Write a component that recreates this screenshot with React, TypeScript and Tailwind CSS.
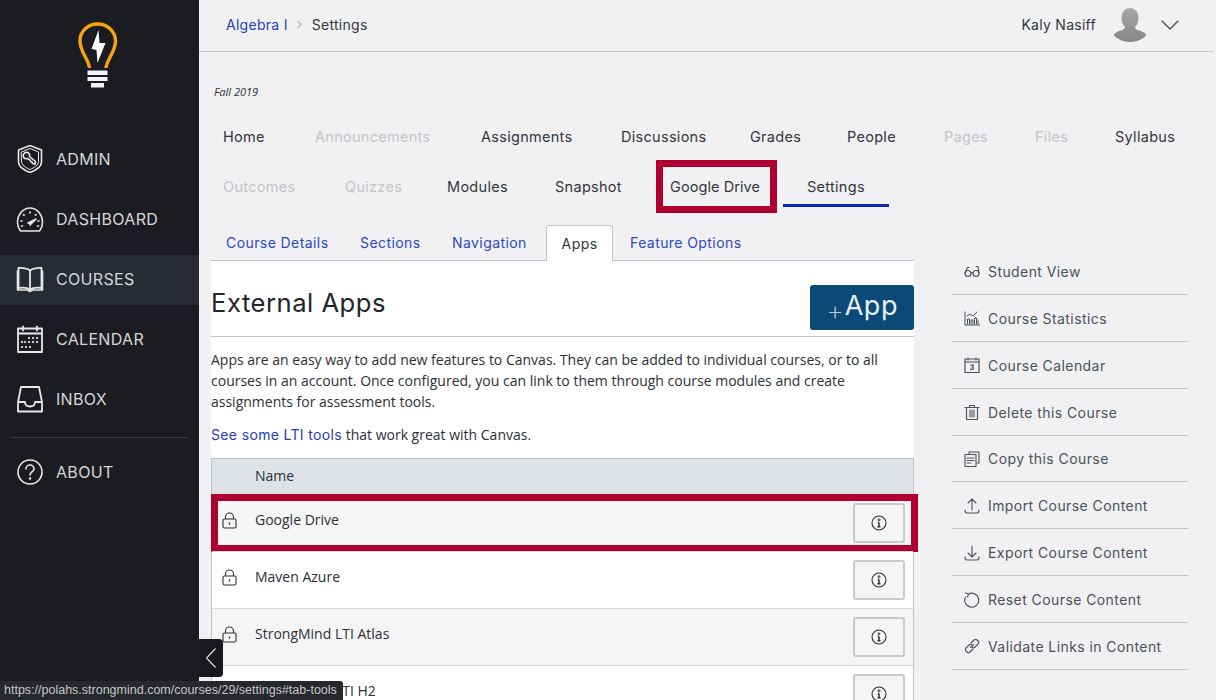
import type { ReactNode } from "react";
import { ChevronDown, ChevronRight } from "lucide-react";

const heading = "font-['Inter','Noto_Sans',sans-serif] tracking-[0.02em]";
const body = "font-['Open_Sans','Noto_Sans',sans-serif]";

const Svg = ({ size = 28, vb = "0 0 28 28", sw = 1.6, children }: { size?: number; vb?: string; sw?: number; children: ReactNode }) => (
  <svg width={size} height={size} viewBox={vb} fill="none" stroke="currentColor" strokeWidth={sw} strokeLinecap="round" strokeLinejoin="round" className="shrink-0">
    {children}
  </svg>
);

const sideIcons: Record<string, ReactNode> = {
  ADMIN: (
    <Svg>
      <path d="M14 .5 25.500 5v12c0 4.500-5 8-11.500 10.500C7.500 25 2.500 21.500 2.500 17V5z" />
      <path d="M5.500 7 14 3.500 22.500 7v9.500c0 3.500-4 6-8.500 8-4.500-2-8.500-4.500-8.500-8z" strokeWidth="1" />
      <path d="M8 8.500c1.500-1.500 4-1.500 5 0 .8 1 .8 2 .5 3l6 5-.5 2.500-2.500-.5-.5-1.500-1.500-.5-.5-1.500-2.500-1.500c-1.500.5-3 0-3.700-1-.8-1.300-.8-3 .2-4z" />
    </Svg>
  ),
  DASHBOARD: (
    <Svg>
      <path d="M4.500 26C2.500 23.500 1.500 20.500 1.500 17.500 1.500 9.500 7 3 14 3s12.500 6.500 12.500 14.500c0 3-1 6-3 8.500z" />
      <path d="m12 18 8-4-6 6" fill="currentColor" />
      <path d="M14 7v1M7.500 9.500l.6.6M5 16h1M20 9.500l-.6.6M23 16h-1M5.500 21h1M21.500 21h1" />
    </Svg>
  ),
  COURSES: (
    <Svg>
      <path d="M14 5.500C12 3.500 6 2.500 2.500 3v20c4-.5 9.500 0 11.500 1.500 2-1.500 7.500-2 11.500-1.500V3C22 2.500 16 3.500 14 5.500zM14 5.500v19" strokeWidth="1.800" />
      <path d="M1.500 6v19h10l2.500 1.500 2.500-1.500h10V6" strokeWidth="1.600" />
    </Svg>
  ),
  CALENDAR: (
    <Svg>
      <rect x="2" y="3.500" width="24" height="23.500" strokeWidth="1.800" />
      <path d="M2 8.500h24M7 1.500v4M21 1.500v4" strokeWidth="1.800" />
      <path d="M13 13h.1M17 13h.1M21 13h.1M9 17h.1M13 17h.1M17 17h.1M21 17h.1M6 17h.1M6 22h.1M10 22h.1M14 22h.1" strokeWidth="2.200" />
    </Svg>
  ),
  INBOX: (
    <Svg>
      <path d="M2 26.500V17L5 2h18l3 15v9.500zM2 17h7c0 3 2 4.500 5 4.500s5-1.500 5-4.500h7" strokeWidth="1.800" />
    </Svg>
  ),
  ABOUT: (
    <Svg>
      <circle cx="14" cy="14" r="12" />
      <path d="M10 11c0-2.500 2-4 4-4s4 1.500 4 3.800c0 3-4 3.200-4 6.200" />
      <path d="M14 20.500v.1" strokeWidth="2.400" />
    </Svg>
  ),
};

const sideItems = ["ADMIN", "DASHBOARD", "COURSES", "CALENDAR", "INBOX"];

const SideItem = ({ label, active }: { label: string; active?: boolean }) => (
  <div className={`flex h-[50px] items-center pb-[2px] pl-4 ${active ? "bg-[#272b33]" : ""}`}>
    <span className="w-10 text-[#e8e8e8]">{sideIcons[label]}</span>
    <span className={`${heading} text-[16px] text-[#d6d6d6]`}>{label}</span>
  </div>
);

const rowOne = [
  { t: "Home", w: "w-[92px]" },
  { t: "Announcements", w: "w-[166px]", off: true },
  { t: "Assignments", w: "w-[140px]" },
  { t: "Discussions", w: "w-[129px]" },
  { t: "Grades", w: "w-[97px]" },
  { t: "People", w: "w-[97px]" },
  { t: "Pages", w: "w-[91px]", off: true },
  { t: "Files", w: "w-[80px]", off: true },
  { t: "Syllabus", w: "w-[58px]" },
];

const rowTwo = [
  { t: "Outcomes", w: "w-[122px]", off: true },
  { t: "Quizzes", w: "w-[102px]", off: true },
  { t: "Modules", w: "w-[108px]" },
  { t: "Snapshot", w: "w-[115px]" },
];

const NavText = ({ t, w, off }: { t: string; w: string; off?: boolean }) => (
  <span className={`${w} shrink-0 whitespace-nowrap ${off ? "text-[#c4c5c8]" : "text-[#33363a]"}`}>{t}</span>
);

const subTabs = [
  { t: "Course Details", w: "w-[134px]" },
  { t: "Sections", w: "w-[92px]" },
  { t: "Navigation", w: "w-[94px]" },
];

const rightLinks: { t: string; icon: ReactNode }[] = [
  {
    t: "Student View",
    icon: (
      <Svg size={16} vb="0 0 16 16" sw={1.1}>
        <circle cx="4" cy="10.500" r="3" />
        <circle cx="12" cy="10.500" r="3" />
        <path d="M7 10c.6-.4 1.400-.4 2 0M1 10 3.500 4.500H5M15 10l-1-6.500h-2" />
      </Svg>
    ),
  },
  {
    t: "Course Statistics",
    icon: (
      <Svg size={16} vb="0 0 16 16" sw={1}>
        <path d="M1 2v13h15M3.500 14V9h2v5M7 14v-4h2v4M10.500 14V8h2v6M14 14v-4" />
        <path d="m3 6 3-2 3 2 4-4" />
      </Svg>
    ),
  },
  {
    t: "Course Calendar",
    icon: (
      <Svg size={16} vb="0 0 16 16" sw={1.2}>
        <rect x="1" y="2" width="14" height="13.500" />
        <path d="M1 5h14M4 1v2M12 1v2M6.500 8h3l-1.500 2c1 0 1.600.5 1.600 1.300 0 1.200-2 1.400-3 .7" />
      </Svg>
    ),
  },
  {
    t: "Delete this Course",
    icon: (
      <Svg size={16} vb="0 0 16 16" sw={1.1}>
        <path d="M1 3.500h14M5.500 3.500V1.500h5v2M2.500 3.500v12h11v-12M6 6v7M8 6v7M10 6v7" />
      </Svg>
    ),
  },
  {
    t: "Copy this Course",
    icon: (
      <Svg size={16} vb="0 0 16 16" sw={1.1}>
        <path d="M5 3V1h10v11h-2" />
        <rect x="1" y="3.500" width="11" height="12" />
        <path d="M3 7h7M3 9.500h7M3 12h4" />
      </Svg>
    ),
  },
  {
    t: "Import Course Content",
    icon: (
      <Svg size={16} vb="0 0 16 16" sw={1.1}>
        <path d="M8 12V1M4 5l4-4 4 4M1 12c0 2 .8 3 2 3h10c1.200 0 2-1 2-3" />
      </Svg>
    ),
  },
  {
    t: "Export Course Content",
    icon: (
      <Svg size={16} vb="0 0 16 16" sw={1.1}>
        <path d="M8 1v11M4 8l4 4 4-4M1 12c0 2 .8 3 2 3h10c1.200 0 2-1 2-3" />
      </Svg>
    ),
  },
  {
    t: "Reset Course Content",
    icon: (
      <Svg size={16} vb="0 0 16 16" sw={1.1}>
        <path d="M4.500 2A7 7 0 1 1 1.500 5M1.500 1 4.500 2 3.500 5" />
      </Svg>
    ),
  },
  {
    t: "Validate Links in Content",
    icon: (
      <Svg size={16} vb="0 0 16 16" sw={1.1}>
        <path d="M6.500 9.500 9.500 6.500" />
        <path d="m7 5 3-3c1-1 2-1 3 0l1 1c1 1 1 2 0 3l-3 3c-1 1-2 1-3 0" />
        <path d="m9 11-3 3c-1 1-2 1-3 0l-1-1c-1-1-1-2 0-3l3-3c1-1 2-1 3 0" />
      </Svg>
    ),
  },
];

const Lock = () => (
  <svg width="15" height="17" viewBox="0 0 15 17" fill="none" stroke="#2d3035" strokeWidth="1.100">
    <rect x="1" y="7" width="13" height="9" rx="1.500" />
    <path d="M3.500 7V5a4 4 0 0 1 8 0v2" />
    <path d="M7.500 10.500v2" strokeWidth="1.400" />
  </svg>
);

const InfoIcon = () => (
  <svg width="16" height="16" viewBox="0 0 16 16" fill="none" stroke="#2d3035">
    <circle cx="8" cy="8" r="7" strokeWidth="1.100" />
    <circle cx="8" cy="4.800" r="1" strokeWidth="1" />
    <path d="M8 7.500V11.500M6.500 11.700h3M6.800 7.500h1.200" strokeWidth="1.500" />
  </svg>
);

const apps = [
  { name: "Google Drive", bg: "bg-[#f5f5f5]", mark: true },
  { name: "Maven Azure", bg: "bg-white" },
  { name: "StrongMind LTI Atlas", bg: "bg-[#f5f5f5]" },
  { name: "StrongMind LTI H2", bg: "bg-white" },
];

export default function App() {
  return (
    <div className="relative flex h-[700px] w-[1216px] overflow-hidden bg-[#f1f1f4]">
      <aside className="w-[199px] shrink-0 bg-[#1a1c22]">
        <div className="flex h-[135px] justify-center pr-[3px] pt-[22px]">
          <svg width="40" height="66" viewBox="0 0 40 66">
            <path d="M11.500 46 C11 38 2 30 2 19 C2 9 10 2 19.500 2 C29 2 37.500 9 37.500 19 C37.500 30 28.500 38 28 46" fill="none" stroke="#f7a30f" strokeWidth="3.400" />
            <path d="M20.500 8 13.500 27l5 1 1 13 8-20h-6z" fill="#ffffff" />
            <path d="M9.500 48.500h20V53h-20zM9.500 55h20v4h-20zM13 61h13v4.500H13z" fill="#f4f4f4" />
          </svg>
        </div>
        <div className="flex flex-col gap-[10px]">
          {sideItems.map((s) => (
            <SideItem key={s} label={s} active={s === "COURSES"} />
          ))}
        </div>
        <div className="mx-[11px] mt-[12px] border-t border-[#3a3c42]" />
        <div className="mt-[10px]">
          <SideItem label="ABOUT" />
        </div>
      </aside>

      <div className="min-w-0 flex-1">
        <header className={`${heading} mr-[2px] flex h-[52px] items-center border-b border-[#c4c6c9] pb-[3px] pl-[27px] pr-[28px] text-[14px] text-[#33363a]`}>
          <span className="text-[#2340b8]">Algebra I</span>
          <ChevronRight size={13} strokeWidth={1.2} className="mx-[5.500px] text-[#555]" />
          <span>Settings</span>
          <span className="ml-auto">Kaly Nasiff</span>
          <svg width="32" height="34" viewBox="0 0 32 34" className="ml-[18px] mt-[2px]">
            <defs>
              <linearGradient id="av" x1="0" y1="0" x2="0" y2="1">
                <stop offset="0" stopColor="#a8a8a8" />
                <stop offset="1" stopColor="#858585" />
              </linearGradient>
            </defs>
            <path d="M16 0c5 0 8.500 4 8.500 10 0 4-1.500 7-3.500 9 0 3 4 3 8 5 2 1 3 2 3 3.500C29 31 23 34 16 34S3 31 0 27.500C0 26 1 25 3 24c4-2 8-2 8-5-2-2-3.500-5-3.500-9C7.500 4 11 0 16 0z" fill="url(#av)" />
          </svg>
          <ChevronDown size={32} strokeWidth={0.8} className="ml-[8px] mt-[2px] text-[#3a3d41]" />
        </header>

        <div className="flex">
          <main className="ml-[12px] w-[703px] shrink-0">
            <p className={`${body} h-[60px] pl-[3px] pt-[32px] text-[11px] italic leading-[15px] text-[#2d3035]`}>Fall 2019</p>
            <nav className={`${heading} text-[14.500px]`}>
              <div className="flex h-[50px] items-center pl-[12px]">
                {rowOne.map((n) => <NavText key={n.t} {...n} />)}
              </div>
              <div className="flex h-[50px] items-center pl-[12px]">
                {rowTwo.map((n) => <NavText key={n.t} {...n} />)}
                <span className="relative w-[137px] shrink-0 whitespace-nowrap tracking-[0.005em] text-[#33363a]">
                  Google Drive
                  <span className="absolute left-[-14px] top-[-16px] h-[53px] w-[121px] border-[7px] border-[#b0002f]" />
                </span>
                <span className="relative whitespace-nowrap text-[#33363a]">
                  Settings
                  <span className="absolute left-[-24px] top-[28px] h-[3px] w-[106px] bg-[#1128a8]" />
                </span>
              </div>
            </nav>

            <div className={`${heading} mt-[13px] flex h-[36px] items-center border-b border-[#c0c5cb] pl-[15px] text-[14px] !tracking-[0.03em] text-[#2d48c4]`}>
              {subTabs.map((s) => (
                <span key={s.t} className={`${s.w} whitespace-nowrap`}>{s.t}</span>
              ))}
              <span className="relative mb-[-1px] flex h-[36px] w-[67px] items-center justify-center rounded-t-[3px] border border-b-0 border-[#c0c5cb] bg-white text-[#33363a]">Apps</span>
              <span className="ml-[17px] whitespace-nowrap">Feature Options</span>
            </div>

            <section className="h-[440px] bg-white">
              <div className="flex h-[76px] items-start border-b border-[#c0c5cb]">
                <h1 className={`${heading} pt-[24px] text-[25.600px] font-normal leading-[36px] text-[#22252a]`}>External Apps</h1>
                <button className={`${heading} ml-auto mt-[24px] flex h-[45px] w-[104px] items-end justify-center rounded-[3px] bg-[#0b4a77] pb-[8px] text-[27px] leading-[32px] text-[#e8eef3]`}>
                  <span className="mb-[-4px] text-[28px] font-extralight text-[#b9cad7]">+</span>
                  App
                </button>
              </div>
              <div className={`${body} text-[14px] leading-[21px] text-[#2d3035]`}>
                <p className="mt-[12px]">
                  Apps are an easy way to add new features to Canvas. They can be added to individual courses, or to all courses in an account. Once configured, you can link to them through course modules and create assignments for assessment tools.
                </p>
                <p className="mt-[12px]">
                  <span className="font-['Inter','Noto_Sans',sans-serif] tracking-[0.025em] text-[#2340b8]">See some LTI tools</span> that work great with Canvas.
                </p>
                <div className="mt-[13px] border-x border-t border-[#c0c5cb]">
                  <div className="flex h-[35px] items-center bg-[#dfe3e7] pb-[2px] pl-[43px] text-[#2d3035]">Name</div>
                  {apps.map((a) => (
                    <div key={a.name} className={`relative flex h-[57px] items-center border-t border-[#d5d8dc] ${a.bg} pl-[10px] pr-[8px]`}>
                      <span className="mb-[6px] flex w-[33px]"><Lock /></span>
                      <span className="mb-[8px]">{a.name}</span>
                      <span className="mb-[1px] ml-auto flex h-[40px] w-[52px] items-center justify-center rounded-[3px] border-2 border-[#c6cbd0] bg-[#f5f5f5]">
                        <InfoIcon />
                      </span>
                      {a.mark && <span className="absolute bottom-[-1px] left-[-1px] right-[-5px] top-[-1px] border-[7px] border-[#b0002f]" />}
                    </div>
                  ))}
                </div>
              </div>
            </section>
          </main>

          <ul className={`${heading} ml-[38px] mt-[196px] w-[236px] text-[14px] !tracking-[0.03em] text-[#4b5259]`}>
            {rightLinks.map((l) => (
              <li key={l.t} className="flex h-[46.875px] items-center gap-2 border-b border-[#bfc3c7] pl-[12px] pt-[1px]">
                {l.icon}
                <span className="whitespace-nowrap">{l.t}</span>
              </li>
            ))}
          </ul>
        </div>
      </div>

      <button className="absolute left-[199px] top-[639px] flex h-[38px] w-[24px] items-center justify-center rounded-r-[4px] bg-[#17191e]">
        <svg width="10" height="20" viewBox="0 0 10 20" fill="none" stroke="#e8e8e8" strokeWidth="1.100">
          <path d="M9.500 .5 .5 10l9 9.500" />
        </svg>
      </button>
      <div className="absolute bottom-0 left-0 flex h-[19px] w-[343px] items-center rounded-tr-[3px] bg-[#26282c] pl-[4px] font-['Liberation_Sans',sans-serif] text-[12.500px] whitespace-nowrap text-[#c4c6c8]">
        https://polahs.strongmind.com/courses/29/settings#tab-tools
      </div>
    </div>
  );
}
